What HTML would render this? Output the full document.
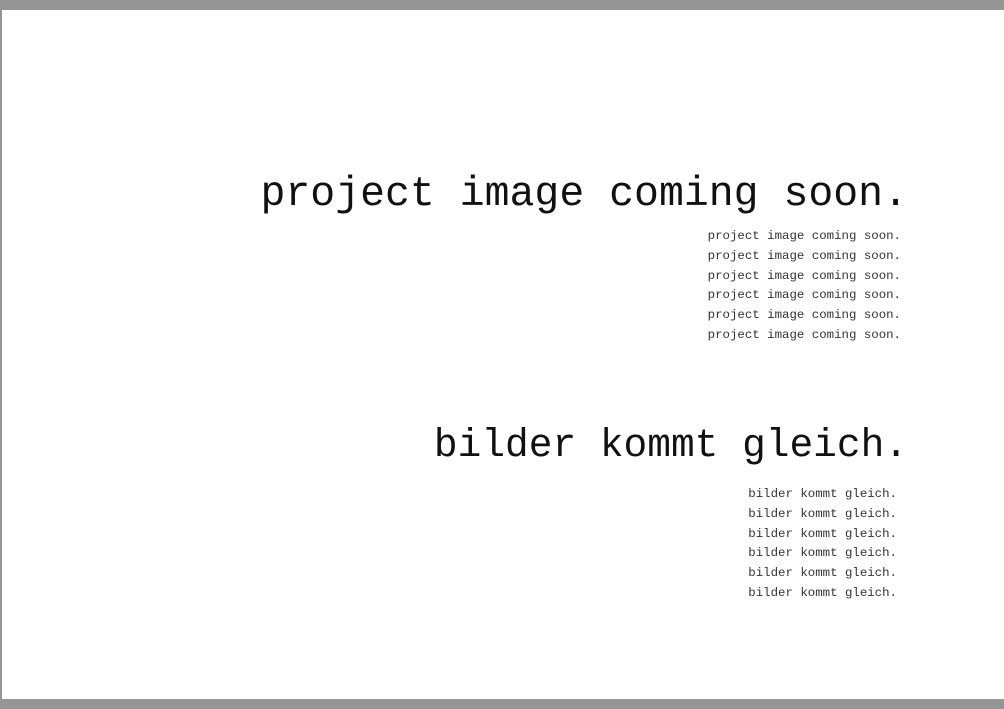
<!DOCTYPE html>
<html><head><style>
html,body{margin:0;padding:0;}
body{width:1004px;height:709px;position:relative;overflow:hidden;background:#fff;font-family:"Liberation Mono",monospace;color:#111;}
.top{position:absolute;left:0;top:0;width:1004px;height:10px;background:#959595;}
.bot{position:absolute;left:0;top:699px;width:1004px;height:10px;background:#959595;}
.lft{position:absolute;left:0;top:0;width:2px;height:709px;background:#959595;}
.t{position:absolute;white-space:nowrap;text-align:right;}
.big{font-size:41.5px;line-height:41px;}
.sm{font-size:12.4px;line-height:19.8px;color:#333;}
</style></head><body>
<div class="top"></div><div class="bot"></div><div class="lft"></div>
<div class="t big" style="right:96px;top:174px">project image coming soon.</div>
<div class="t sm" style="right:103px;top:227px">project image coming soon.<br>project image coming soon.<br>project image coming soon.<br>project image coming soon.<br>project image coming soon.<br>project image coming soon.</div>
<div class="t big" style="right:96px;top:425px;font-size:39.5px">bilder kommt gleich.</div>
<div class="t sm" style="right:107px;top:485px">bilder kommt gleich.<br>bilder kommt gleich.<br>bilder kommt gleich.<br>bilder kommt gleich.<br>bilder kommt gleich.<br>bilder kommt gleich.</div>
</body></html>
